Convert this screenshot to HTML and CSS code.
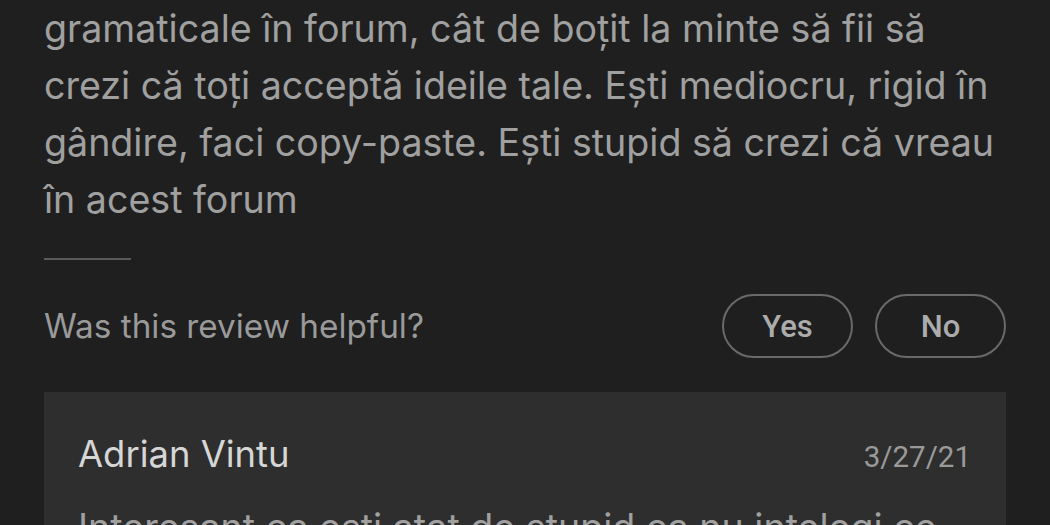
FILE: index.html
```html
<!DOCTYPE html>
<html lang="ro">
<head>
<meta charset="utf-8">
<title>Review</title>
<link rel="stylesheet" href="styles.css">
</head>
<body>
<main class="page">
  <p class="review-text">gramaticale în forum, cât de boțit la minte să fii să crezi că toți acceptă ideile tale. Ești mediocru, rigid în gândire, faci copy-paste. Ești stupid să crezi că vreau în acest forum</p>
  <div class="divider"></div>
  <div class="helpful">
    <span class="helpful-label">Was this review helpful?</span>
    <div class="helpful-actions">
      <button class="pill">Yes</button>
      <button class="pill">No</button>
    </div>
  </div>
  <section class="reply">
    <div class="reply-head">
      <span class="reply-name">Adrian Vintu</span>
      <span class="reply-date">3/27/21</span>
    </div>
    <p class="reply-text">Interesant ca esti atat de stupid ca nu intelegi ce scrii si ce citesti in acest forum</p>
  </section>
</main>
</body>
</html>
```
FILE: styles.css
```css
html, body {
  margin: 0;
  padding: 0;
  background: #1f1f1f;
  overflow: hidden;
}
.page {
  width: 962px;
  padding: 0 44px;
  font-family: Inter, "Open Sans", sans-serif;
}
.review-text {
  margin: 0;
  width: 970px;
  font-size: 37.6px;
  line-height: 57px;
  color: #a0a0a0;
}
.divider {
  width: 87px;
  height: 2px;
  background: #5a5a5a;
  margin-top: 30px;
}
.helpful {
  display: flex;
  align-items: center;
  justify-content: space-between;
  margin-top: 34px;
}
.helpful-label {
  font-size: 33.3px;
  color: #9a9a9a;
}
.helpful-actions {
  display: flex;
  gap: 22px;
}
.pill {
  box-sizing: border-box;
  height: 64px;
  width: 131px;
  border: 2px solid #6a6a6a;
  border-radius: 32px;
  background: transparent;
  color: #acacac;
  font-family: Roboto, sans-serif;
  font-weight: 500;
  font-size: 31px;
  padding: 0;
}
.reply {
  margin-top: 34px;
  background: #2e2e2e;
  padding: 40px 35px 0 34px;
  height: 200px;
}
.reply-head {
  display: flex;
  justify-content: space-between;
  align-items: baseline;
}
.reply-name {
  font-size: 36.4px;
  color: #d6d6d6;
}
.reply-date {
  font-family: Roboto, sans-serif;
  font-size: 29.5px;
  color: #9a9a9a;
}
.reply-text {
  margin: 23px 0 0;
  font-size: 37.6px;
  line-height: 57px;
  color: #a0a0a0;
}
```
